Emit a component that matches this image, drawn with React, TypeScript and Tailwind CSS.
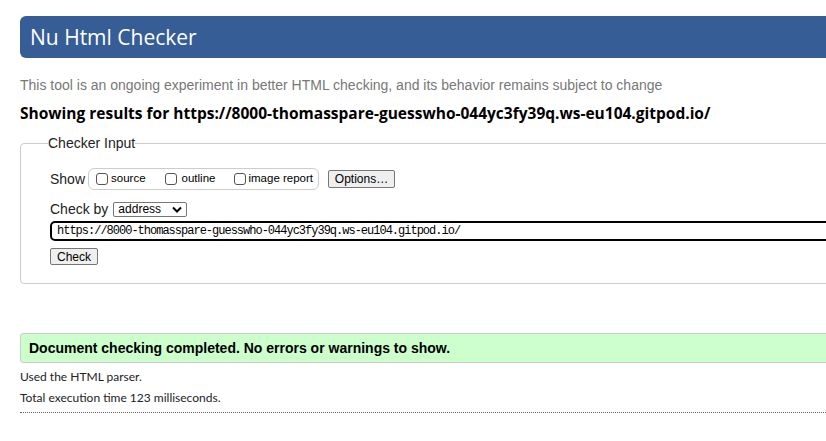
export default function App() {
  const url = "https://8000-thomasspare-guesswho-044yc3fy39q.ws-eu104.gitpod.io/";

  return (
    <div className="w-[826px] h-[441px] overflow-hidden bg-white">
      <div className="ml-5 w-[1000px] pt-4">
        {/* HEADER */}
        <div className="h-[42px] rounded-l-md bg-[#365d95] pl-[10px] flex items-center">
          <h1 className="text-white text-[21px] font-['Open_Sans',sans-serif] leading-none">
            Nu Html Checker
          </h1>
        </div>

        <p className="mt-[19px] text-[14px] leading-4 text-[#777] font-['Liberation_Sans',Arial,sans-serif]">
          This tool is an ongoing experiment in better HTML checking, and its behavior remains subject to change
        </p>

        <h2 className="mt-[10px] text-[15.5px] leading-5 font-bold text-black font-['Open_Sans',sans-serif]">
          Showing results for {url}
        </h2>

        {/* CHECKER INPUT */}
        <fieldset className="mt-[12px] border border-[#ccc] rounded-[4px] h-[149px] pl-[29px] pr-0">
          <legend className="ml-[-2px] px-0 text-[14px] leading-4 text-[#222] font-['Liberation_Sans',Arial,sans-serif]">
            Checker Input
          </legend>

          <div className="mt-[17px] h-[22px] flex items-center font-['Liberation_Sans',Arial,sans-serif]">
            <span className="text-[14px] text-[#222]">Show</span>
            <div className="ml-[3px] h-[22px] border border-[#ccc] rounded-[6px] flex items-center pl-[7px] pr-[5px] text-[11.5px] text-black">
              <label className="flex items-center gap-[3px]">
                <span className="w-[12px] h-[12px] border border-[#555] rounded-[3px]" />
                source
              </label>
              <label className="ml-[19px] flex items-center gap-[5px]">
                <span className="w-[12px] h-[12px] border border-[#555] rounded-[3px]" />
                outline
              </label>
              <label className="ml-[19px] flex items-center gap-[2px]">
                <span className="w-[12px] h-[12px] border border-[#555] rounded-[3px]" />
                image report
              </label>
            </div>
            <button className="ml-[9px] w-[67px] h-[18px] bg-[#efefef] border border-[#767676] rounded-[2px] text-[12px] leading-none text-black">
              Options…
            </button>
          </div>

          <div className="mt-[11px] h-[16px] flex items-center font-['Liberation_Sans',Arial,sans-serif]">
            <span className="text-[14px] text-[#222]">Check by</span>
            <div className="ml-[5px] w-[74px] h-[15px] border border-[#767676] rounded-[2px] flex items-center justify-between pl-[4px] pr-[4px] text-[12px] leading-none text-black">
              address
              <svg width="10" height="7" viewBox="0 0 10 7">
                <path d="M1 1.5 L5 5.5 L9 1.5" fill="none" stroke="#000" strokeWidth="2" />
              </svg>
            </div>
          </div>

          <div className="mt-[4px] h-[20px] border-2 border-black rounded-l-[5px] flex items-center pl-[5px] text-[12px] tracking-[-1px] font-['Liberation_Mono',monospace] text-black">
            {url}
          </div>

          <button className="mt-[7px] w-[48px] h-[17px] bg-[#efefef] border border-[#767676] rounded-[2px] text-[12px] leading-none text-black font-['Liberation_Sans',Arial,sans-serif]">
            Check
          </button>
        </fieldset>

        {/* RESULT */}
        <div className="mt-[49px] h-[30px] bg-[#ccffcc] border border-[#ccc] rounded-l-[3px] flex items-center pl-[8px]">
          <p className="text-[14px] font-bold text-black font-['Liberation_Sans',Arial,sans-serif]">
            Document checking completed. No errors or warnings to show.
          </p>
        </div>

        <p className="mt-[6px] text-[12px] leading-4 text-[#222] font-['Lato',sans-serif]">Used the HTML parser.</p>
        <p className="mt-[5px] text-[12px] leading-4 text-[#222] font-['Lato',sans-serif]">
          Total execution time 123 milliseconds.
        </p>
        <div className="mt-[6px] border-t border-dotted border-[#666]" />
      </div>
    </div>
  );
}
